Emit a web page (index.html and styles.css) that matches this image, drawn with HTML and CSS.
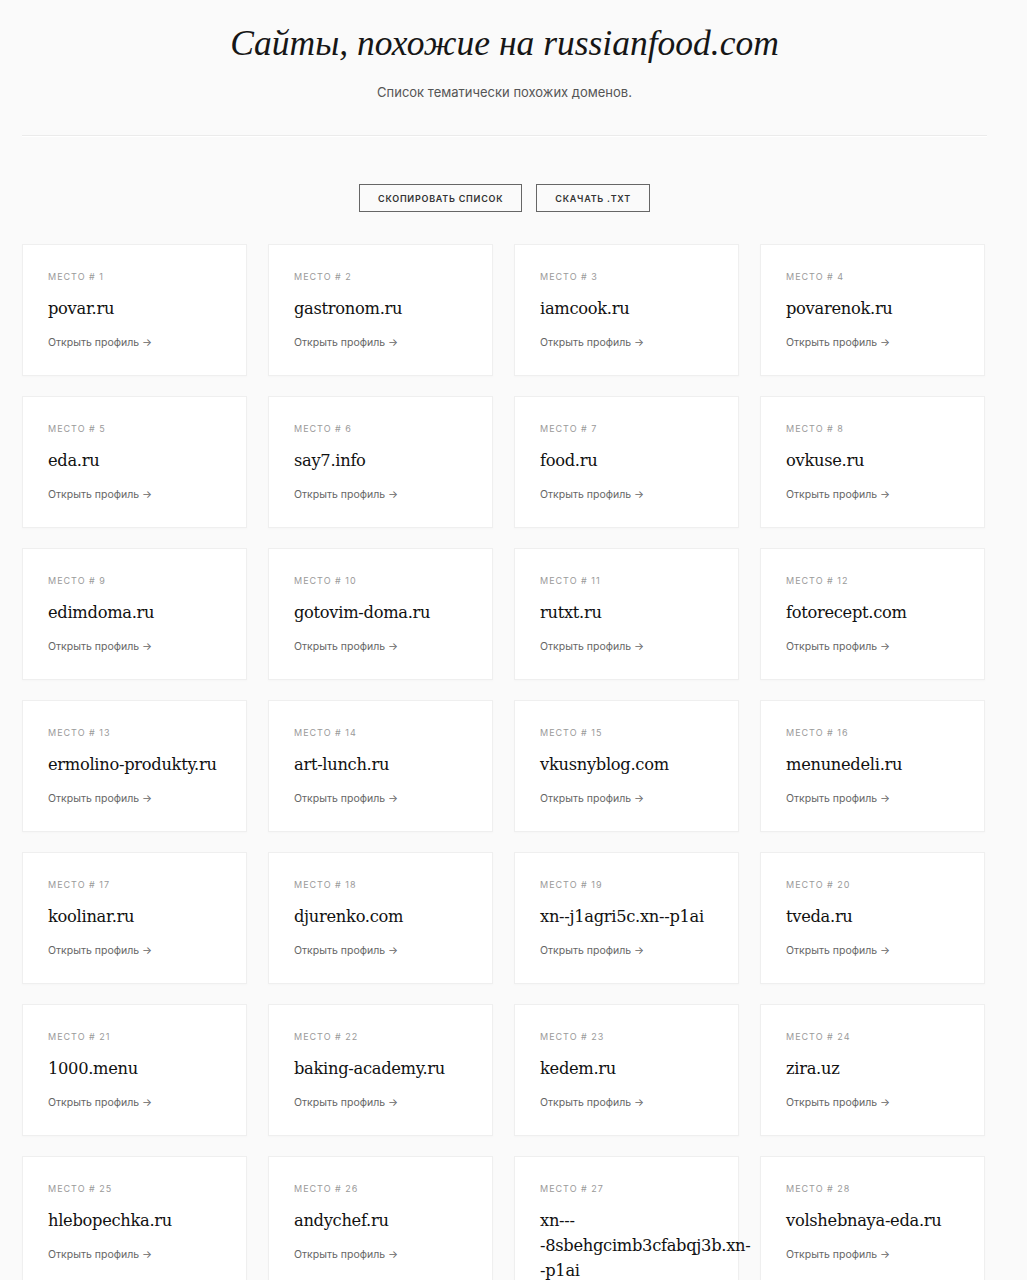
FILE: index.html
```html
<!DOCTYPE html>
<html lang="ru">
<head>
<meta charset="utf-8">
<title>Сайты, похожие на russianfood.com</title>
<link rel="stylesheet" href="styles.css">
</head>
<body>
<main class="page">
  <header class="head">
    <h1 class="title">Сайты, похожие на russianfood.com</h1>
    <p class="lead">Список тематически похожих доменов.</p>
  </header>
  <hr class="rule">
  <div class="actions">
    <button class="btn" type="button">Скопировать список</button>
    <button class="btn" type="button">Скачать .txt</button>
  </div>
  <section class="grid">
    <article class="card"><div class="rank">Место # 1</div><div class="domain">povar.ru</div><a class="link" href="#">Открыть профиль →</a></article>
    <article class="card"><div class="rank">Место # 2</div><div class="domain">gastronom.ru</div><a class="link" href="#">Открыть профиль →</a></article>
    <article class="card"><div class="rank">Место # 3</div><div class="domain">iamcook.ru</div><a class="link" href="#">Открыть профиль →</a></article>
    <article class="card"><div class="rank">Место # 4</div><div class="domain">povarenok.ru</div><a class="link" href="#">Открыть профиль →</a></article>
    <article class="card"><div class="rank">Место # 5</div><div class="domain">eda.ru</div><a class="link" href="#">Открыть профиль →</a></article>
    <article class="card"><div class="rank">Место # 6</div><div class="domain">say7.info</div><a class="link" href="#">Открыть профиль →</a></article>
    <article class="card"><div class="rank">Место # 7</div><div class="domain">food.ru</div><a class="link" href="#">Открыть профиль →</a></article>
    <article class="card"><div class="rank">Место # 8</div><div class="domain">ovkuse.ru</div><a class="link" href="#">Открыть профиль →</a></article>
    <article class="card"><div class="rank">Место # 9</div><div class="domain">edimdoma.ru</div><a class="link" href="#">Открыть профиль →</a></article>
    <article class="card"><div class="rank">Место # 10</div><div class="domain">gotovim-doma.ru</div><a class="link" href="#">Открыть профиль →</a></article>
    <article class="card"><div class="rank">Место # 11</div><div class="domain">rutxt.ru</div><a class="link" href="#">Открыть профиль →</a></article>
    <article class="card"><div class="rank">Место # 12</div><div class="domain">fotorecept.com</div><a class="link" href="#">Открыть профиль →</a></article>
    <article class="card"><div class="rank">Место # 13</div><div class="domain">ermolino-produkty.ru</div><a class="link" href="#">Открыть профиль →</a></article>
    <article class="card"><div class="rank">Место # 14</div><div class="domain">art-lunch.ru</div><a class="link" href="#">Открыть профиль →</a></article>
    <article class="card"><div class="rank">Место # 15</div><div class="domain">vkusnyblog.com</div><a class="link" href="#">Открыть профиль →</a></article>
    <article class="card"><div class="rank">Место # 16</div><div class="domain">menunedeli.ru</div><a class="link" href="#">Открыть профиль →</a></article>
    <article class="card"><div class="rank">Место # 17</div><div class="domain">koolinar.ru</div><a class="link" href="#">Открыть профиль →</a></article>
    <article class="card"><div class="rank">Место # 18</div><div class="domain">djurenko.com</div><a class="link" href="#">Открыть профиль →</a></article>
    <article class="card"><div class="rank">Место # 19</div><div class="domain">xn--j1agri5c.xn--p1ai</div><a class="link" href="#">Открыть профиль →</a></article>
    <article class="card"><div class="rank">Место # 20</div><div class="domain">tveda.ru</div><a class="link" href="#">Открыть профиль →</a></article>
    <article class="card"><div class="rank">Место # 21</div><div class="domain">1000.menu</div><a class="link" href="#">Открыть профиль →</a></article>
    <article class="card"><div class="rank">Место # 22</div><div class="domain">baking-academy.ru</div><a class="link" href="#">Открыть профиль →</a></article>
    <article class="card"><div class="rank">Место # 23</div><div class="domain">kedem.ru</div><a class="link" href="#">Открыть профиль →</a></article>
    <article class="card"><div class="rank">Место # 24</div><div class="domain">zira.uz</div><a class="link" href="#">Открыть профиль →</a></article>
    <article class="card"><div class="rank">Место # 25</div><div class="domain">hlebopechka.ru</div><a class="link" href="#">Открыть профиль →</a></article>
    <article class="card"><div class="rank">Место # 26</div><div class="domain">andychef.ru</div><a class="link" href="#">Открыть профиль →</a></article>
    <article class="card"><div class="rank">Место # 27</div><div class="domain domain-long">xn---<br>-8sbehgcimb3cfabqj3b.xn-<br>-p1ai</div><a class="link" href="#">Открыть профиль →</a></article>
    <article class="card"><div class="rank">Место # 28</div><div class="domain">volshebnaya-eda.ru</div><a class="link" href="#">Открыть профиль →</a></article>
  </section>
</main>
</body>
</html>
```
FILE: styles.css
```css
html, body {
  margin: 0;
  padding: 0;
  background: #fafafa;
  color: #111;
  font-family: Inter, "Noto Sans", "Liberation Sans", sans-serif;
}

.page {
  width: 965px;
  margin: 0 0 0 22px;
  padding-bottom: 40px;
}

.head {
  text-align: center;
  padding-top: 20px;
}

.title {
  margin: 0;
  font-family: "Liberation Serif", "DejaVu Serif", serif;
  font-style: italic;
  font-weight: 400;
  font-size: 35.5px;
  line-height: 46px;
  color: #161616;
}

.lead {
  margin: 17px 0 0;
  font-size: 13px;
  line-height: 18px;
  color: #555;
}

.rule {
  margin: 34px 0 0;
  height: 0;
  border: 0;
  border-top: 1px solid #ebebeb;
  border-bottom: 1px solid #fff;
}

.actions {
  display: flex;
  justify-content: center;
  gap: 14px;
  padding-top: 47px;
}

.btn {
  height: 28px;
  padding: 0 18px;
  background: #fafafa;
  border: 1px solid #666;
  border-radius: 0;
  font-family: Inter, "Noto Sans", sans-serif;
  font-size: 9px;
  font-weight: 600;
  letter-spacing: 0.75px;
  text-transform: uppercase;
  color: #333;
}

.grid {
  display: grid;
  grid-template-columns: repeat(4, 225px);
  column-gap: 21px;
  row-gap: 20px;
  margin-top: 32px;
}

.card {
  background: #fff;
  border: 1px solid #efefef;
  min-height: 132px;
  padding: 26px 25px 24px;
  box-sizing: border-box;
  box-shadow: 0 1px 2px rgba(0, 0, 0, 0.02);
}

.rank {
  font-size: 9px;
  line-height: 12px;
  letter-spacing: 1px;
  text-transform: uppercase;
  color: #9a9a9a;
}

.domain {
  margin-top: 13px;
  font-family: "DejaVu Serif", "Liberation Serif", serif;
  font-size: 16.3px;
  line-height: 25px;
  letter-spacing: -0.3px;
  color: #111;
}

.domain-long {
  white-space: nowrap;
}

.link {
  display: inline-block;
  margin-top: 15px;
  font-size: 10.5px;
  line-height: 14px;
  color: #666;
  text-decoration: none;
}
```
